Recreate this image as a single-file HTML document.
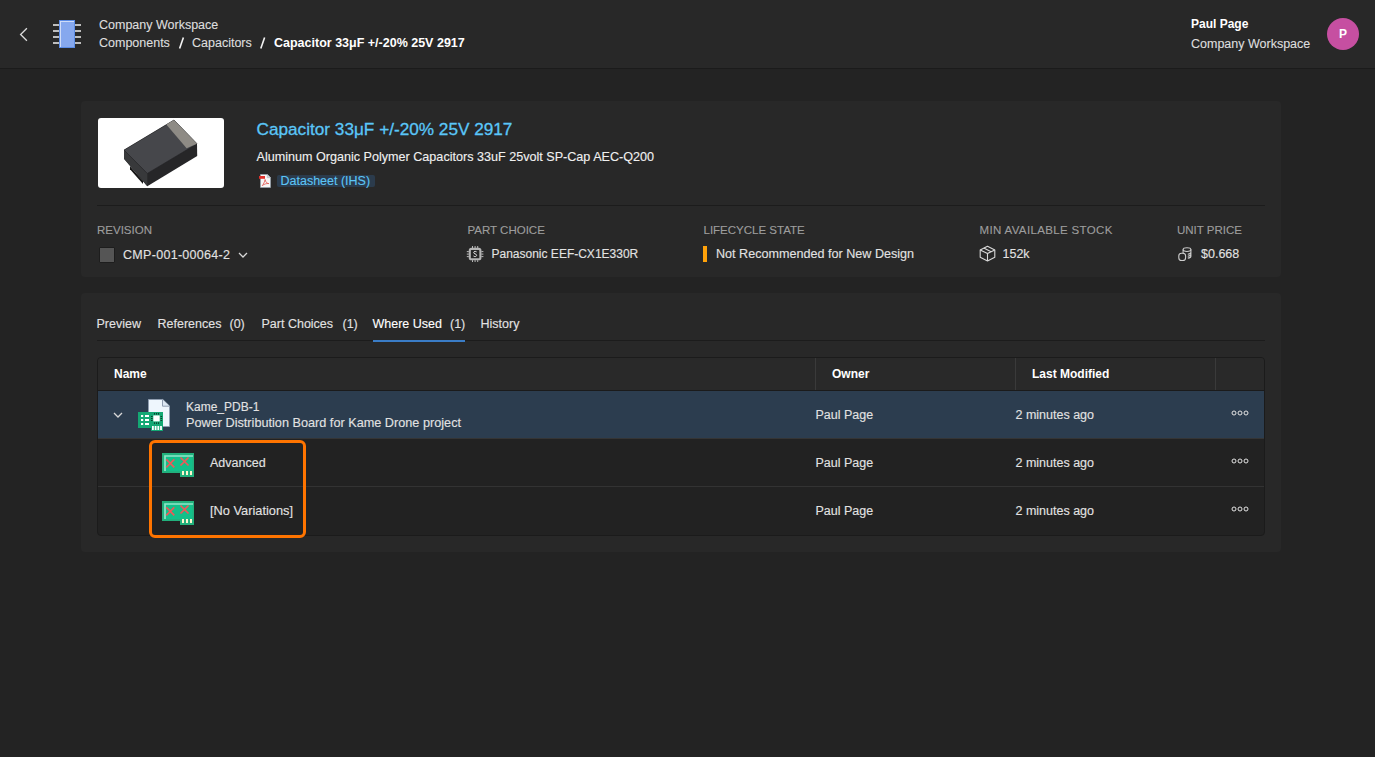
<!DOCTYPE html>
<html><head><meta charset="utf-8">
<style>
*{margin:0;padding:0;box-sizing:border-box}
html,body{width:1375px;height:757px;overflow:hidden;background:#232323;font-family:"Liberation Sans",sans-serif;color:#e2e2e2;-webkit-text-stroke:0.12px}
.b{-webkit-text-stroke:0}
.a{position:absolute;white-space:pre;line-height:1}
.t125{font-size:12.5px}
.b{font-weight:700}
#hdr{position:absolute;left:0;top:0;width:1375px;height:69px;background:#282828;border-bottom:1px solid #1b1b1b}
.card{position:absolute;background:#282828;border-radius:4px}
.lbl{font-size:11.5px;color:#9d9d9d}
</style></head><body>
<div id="hdr"></div>
<!-- back chevron -->
<svg class="a" style="left:0;top:0" width="100" height="68">
  <polyline points="26.9,28.3 20.6,34.5 26.9,40.7" fill="none" stroke="#dcdcdc" stroke-width="1.3"/>
  <g fill="#bdbdbd">
    <rect x="53" y="24" width="6" height="2"/><rect x="53" y="30" width="6" height="2"/><rect x="53" y="36" width="6" height="2"/><rect x="53" y="42" width="6" height="2"/>
    <rect x="75" y="24" width="6" height="2"/><rect x="75" y="30" width="6" height="2"/><rect x="75" y="36" width="6" height="2"/><rect x="75" y="42" width="6" height="2"/>
  </g>
  <rect x="59" y="20" width="16" height="28" fill="#5b8ce6"/>
  <rect x="60" y="21" width="14" height="26" fill="#cfdcf7"/>
  <rect x="61" y="22" width="13" height="25" fill="#86a8ee"/>
</svg>
<div class="a t125" style="left:99px;top:19.3px;color:#dedede">Company Workspace</div>
<div class="a t125" style="left:99px;top:37.1px;color:#dedede">Components</div>
<svg class="a" style="left:170px;top:30px" width="110" height="25"><g stroke="#f4f4f4" stroke-width="1.6"><path d="M13.4,7.6 L9.6,18.6"/><path d="M94.6,7.6 L90.8,18.6"/></g></svg>
<div class="a t125" style="left:192px;top:37.1px;color:#dedede">Capacitors</div>

<div class="a t125 b" style="left:274px;top:37.1px;color:#fff">Capacitor 33μF +/-20% 25V 2917</div>

<div class="a b" style="left:1191px;top:17.8px;font-size:12px;color:#fff">Paul Page</div>
<div class="a t125" style="left:1191px;top:38.4px;color:#dedede">Company Workspace</div>
<div class="a b" style="left:1327px;top:18px;width:32px;height:32px;border-radius:50%;background:#c64fa1;color:#fff;font-size:12px;line-height:32px;text-align:center">P</div>

<!-- card 1 -->
<div class="card" style="left:81px;top:101px;width:1200px;height:176px"></div>
<div class="a" style="left:98px;top:118px;width:126px;height:70px;background:#fff;border-radius:3px"></div>
<svg class="a" style="left:0;top:0" width="300" height="200">
  <polygon points="124,150 174,120 197,143.7 197.2,156 147.3,186.3 124,158.8" fill="#262628"/>
  <polygon points="124,150 147.3,173.4 147.3,186.3 124,158.8" fill="#38393b"/>
  <polygon points="130,166.2 143,181 143,184 130,169.2" fill="#151515"/>
  <polygon points="124,150 174,120 197,143.7 147.3,173.4" fill="#46474b" stroke="#1e1e20" stroke-width="0.5"/>
  <polygon points="166.3,124.6 174,120 197,143.7 186.6,148.2" fill="#8e8b85"/>
</svg>
<div class="a" style="left:256.5px;top:120.6px;font-size:17.2px;color:#5ac6f8;-webkit-text-stroke:0.3px">Capacitor 33μF +/-20% 25V 2917</div>
<div class="a" style="left:256.5px;top:150.5px;font-size:12.6px;color:#f0f0f0">Aluminum Organic Polymer Capacitors 33uF 25volt SP-Cap AEC-Q200</div>
<svg class="a" style="left:256px;top:172px" width="18" height="18" viewBox="256 172 18 18">
  <path d="M260.5,174.5 H267.5 L270.5,177.5 V187.5 H260.5 Z" fill="#f7f7f7" stroke="#9aa3ad" stroke-width="0.7"/>
  <path d="M267.3,174.6 V177.7 H270.4 Z" fill="#d9dee4" stroke="#9aa3ad" stroke-width="0.5"/>
  <rect x="259" y="176" width="6" height="2.8" fill="#e0312c"/>
  <path d="M262.3,185.6 C263.5,184.2 264.8,181.5 265.1,179.5 C265.4,181.8 266.6,183.2 268.8,183.6 C266.8,183.3 264.2,184 262.3,185.6 Z" fill="none" stroke="#e0403a" stroke-width="0.7"/>
</svg>
<div class="a" style="left:277px;top:175px;width:98px;height:12px;background:#2b3b4c;border-radius:2px"></div>
<div class="a t125" style="left:280.5px;top:175.3px;color:#5bc4f5">Datasheet (IHS)</div>

<div class="a" style="left:97px;top:205px;width:1168px;height:1px;background:#1c1c1c"></div>

<div class="a lbl" style="left:97px;top:225px">REVISION</div>
<div class="a lbl" style="left:467.5px;top:225px">PART CHOICE</div>
<div class="a lbl" style="left:703.5px;top:225px">LIFECYCLE STATE</div>
<div class="a lbl" style="left:979.5px;top:225px;letter-spacing:0.35px">MIN AVAILABLE STOCK</div>
<div class="a lbl" style="left:1177px;top:225px">UNIT PRICE</div>

<div class="a" style="left:99px;top:247px;width:16px;height:16px;background:#555;border:1px solid #1d1d1d;border-radius:1px"></div>
<div class="a t125" style="left:123px;top:249.4px;letter-spacing:0.3px">CMP-001-00064-2</div>
<svg class="a" style="left:237px;top:250px" width="12" height="10"><polyline points="2,3 6,7 10,3" fill="none" stroke="#d8d8d8" stroke-width="1.3"/></svg>

<svg class="a" style="left:464px;top:243px" width="22" height="22" viewBox="464 243 22 22">
  <rect x="469.8" y="248.9" width="10.6" height="10.4" rx="1.6" fill="#262626" stroke="#b4b4b4" stroke-width="2.1"/>
  <g stroke="#c8c8c8" stroke-width="0.9">
    <path d="M472.5,246 V248 M475.1,246 V248 M477.7,246 V248 M472.5,260.2 V262 M475.1,260.2 V262 M477.7,260.2 V262"/>
    <path d="M466.8,251.6 H468.8 M466.8,254.1 H468.8 M466.8,256.6 H468.8 M481.4,251.6 H483.4 M481.4,254.1 H483.4 M481.4,256.6 H483.4"/>
  </g>
  <path d="M476.6,251.9 C476.2,251.5 475.6,251.4 475.1,251.4 C474.3,251.4 473.7,251.9 473.7,252.6 C473.7,254.1 476.6,253.6 476.6,255.3 C476.6,256.1 475.9,256.6 475.1,256.6 C474.5,256.6 473.9,256.4 473.5,256" fill="none" stroke="#e8e8e8" stroke-width="1"/>
</svg>
<div class="a" style="left:491.5px;top:247.9px;font-size:12px">Panasonic EEF-CX1E330R</div>

<div class="a" style="left:703px;top:246px;width:4px;height:16px;background:#ffa20a"></div>
<div class="a t125" style="left:716px;top:248.4px;font-size:12.6px">Not Recommended for New Design</div>

<svg class="a" style="left:979px;top:245px" width="17" height="17" viewBox="0 0 17 17">
  <g stroke="#d8d8d8" stroke-width="1.1" fill="none" stroke-linejoin="round">
    <path d="M8.5,1.2 L15.8,4.9 V12.3 L8.5,16 L1.2,12.3 V4.9 Z"/>
    <path d="M1.2,4.9 L8.5,8.6 L15.8,4.9 M8.5,8.6 V16 M4.8,3 L12.1,6.8"/>
  </g>
</svg>
<div class="a t125" style="left:1002.5px;top:248.4px">152k</div>

<svg class="a" style="left:1174px;top:243px" width="22" height="22" viewBox="1174 243 22 22">
  <g stroke="#cdcdcd" stroke-width="1.1" fill="none">
    <ellipse cx="1187" cy="249.6" rx="3.9" ry="1.9"/>
    <path d="M1183.1,249.6 V254 M1190.9,249.6 V256.2 C1190.9,257.2 1189.6,257.9 1187.8,258.1 M1190.9,252.3 C1190.9,253.3 1189.6,254 1187.8,254.2 M1190.9,254.3 C1190.9,255.3 1189.6,256 1187.8,256.2"/>
    <rect x="1178.8" y="253.3" width="6.8" height="7.2" rx="2.8" fill="#282828"/>
  </g>
</svg>
<div class="a t125" style="left:1201px;top:248.4px">$0.668</div>

<!-- card 2 -->
<div class="card" style="left:81px;top:293px;width:1200px;height:259px"></div>
<div class="a t125" style="left:96.5px;top:318.4px">Preview</div>
<div class="a t125" style="left:157.5px;top:318.4px">References</div>
<div class="a t125" style="left:229.5px;top:318.4px">(0)</div>
<div class="a t125" style="left:261.5px;top:318.4px">Part Choices</div>
<div class="a t125" style="left:342.5px;top:318.4px">(1)</div>
<div class="a t125" style="left:372.5px;top:318.4px;color:#fff">Where Used</div>
<div class="a t125" style="left:450px;top:318.4px">(1)</div>
<div class="a t125" style="left:480.5px;top:318.4px">History</div>
<div class="a" style="left:97px;top:340px;width:1168px;height:1px;background:#1c1c1c"></div>
<div class="a" style="left:373px;top:340px;width:92px;height:2px;background:#3a7cc6"></div>

<!-- table -->
<div class="a" style="left:97px;top:357px;width:1168px;height:179px;background:#222;border:1px solid #1b1b1b;border-radius:4px;overflow:hidden">
  <div class="a" style="left:0;top:0;width:1166px;height:33px;background:#292929;border-bottom:1px solid #1b1b1b"></div>
  <div class="a" style="left:717px;top:0;width:1px;height:32px;background:#3a3a3a"></div>
  <div class="a" style="left:917px;top:0;width:1px;height:32px;background:#3a3a3a"></div>
  <div class="a" style="left:1117px;top:0;width:1px;height:32px;background:#3a3a3a"></div>
  <div class="a" style="left:0;top:33px;width:1166px;height:47px;background:#2c3d4f"></div>
  <div class="a" style="left:0;top:128px;width:1166px;height:1px;background:#333"></div>
  <div class="a" style="left:0;top:80px;width:1166px;height:1px;background:#353535"></div>
</div>
<div class="a t125 b" style="left:114px;top:367.8px;font-size:12px;color:#fff">Name</div>
<div class="a t125 b" style="left:832px;top:367.8px;font-size:12px;color:#fff">Owner</div>
<div class="a t125 b" style="left:1032px;top:367.8px;font-size:12px;color:#fff">Last Modified</div>

<svg class="a" style="left:112px;top:410px" width="12" height="10"><polyline points="2,3 6,7 10,3" fill="none" stroke="#d8d8d8" stroke-width="1.3"/></svg>
<div class="a t125" style="left:186px;top:400.9px;font-size:12px">Kame_PDB-1</div>
<div class="a t125" style="left:186px;top:416.5px;font-size:12.7px">Power Distribution Board for Kame Drone project</div>
<div class="a t125" style="left:815.5px;top:408.7px">Paul Page</div>
<div class="a t125" style="left:1015.5px;top:408.7px">2 minutes ago</div>
<div class="a t125" style="left:210px;top:457.4px">Advanced</div>
<div class="a t125" style="left:815.5px;top:457.4px">Paul Page</div>
<div class="a t125" style="left:1015.5px;top:457.4px">2 minutes ago</div>
<div class="a t125" style="left:210px;top:505.1px;font-size:12.8px">[No Variations]</div>
<div class="a t125" style="left:815.5px;top:505.1px">Paul Page</div>
<div class="a t125" style="left:1015.5px;top:505.1px">2 minutes ago</div>


<!-- kame icon -->
<svg class="a" style="left:136px;top:397px" width="36" height="36" viewBox="136 397 36 36">
  <path d="M148.5,399.5 H162.8 L169.5,406 V426.5 H148.5 Z" fill="#eef6fd" stroke="#8f9db0" stroke-width="1"/>
  <path d="M162.5,399.5 V406.2 H169.5" fill="#dde8f3" stroke="#8f9db0" stroke-width="1"/>
  <rect x="138" y="412" width="25" height="16" fill="#14a874"/>
  <rect x="151" y="428" width="12" height="3" fill="#14a874"/>
  <g fill="#fff">
    <rect x="141" y="415" width="2.2" height="2"/><rect x="141" y="419" width="2.2" height="2"/><rect x="141" y="423" width="2.2" height="2"/>
    <rect x="145" y="415" width="4" height="2"/><rect x="145" y="419" width="4" height="2"/><rect x="145" y="423" width="4" height="2"/>
    <rect x="153.3" y="415.4" width="6.4" height="6"/>
    <rect x="152" y="426" width="1.8" height="4"/><rect x="154.7" y="426" width="1.8" height="4"/><rect x="157.4" y="426" width="1.8" height="4"/><rect x="160.1" y="426" width="1.8" height="4"/>
  </g>
  <g fill="#0b3d2b">
    <rect x="154" y="413" width="1" height="1.6"/><rect x="156" y="413" width="1" height="1.6"/><rect x="158" y="413" width="1" height="1.6"/>
    <rect x="154" y="422.3" width="1" height="1.6"/><rect x="156" y="422.3" width="1" height="1.6"/><rect x="158" y="422.3" width="1" height="1.6"/>
    <rect x="151" y="416" width="1.6" height="1"/><rect x="151" y="418" width="1.6" height="1"/><rect x="151" y="420" width="1.6" height="1"/>
    <rect x="160.5" y="416" width="1.6" height="1"/><rect x="160.5" y="418" width="1.6" height="1"/><rect x="160.5" y="420" width="1.6" height="1"/>
  </g>
</svg>
<svg class="a" style="left:161px;top:452px" width="35" height="26" viewBox="161 452 35 26">
  <path d="M162,453 H194 V477 H180 V473 H162 Z" fill="#22b07c"/>
  <rect x="164.5" y="455.2" width="28" height="16" fill="#13c08a"/>
  <path d="M165,471 V456 H193" fill="none" stroke="#92e3c8" stroke-width="1.7"/>
  <g stroke="#ef5858" stroke-width="1.7">
    <path d="M166.3,459.3 L174.3,467.3 M174.3,459.3 L166.3,467.3"/>
    <path d="M180.5,457.5 L188.5,465.5 M188.5,457.5 L180.5,465.5"/>
  </g>
  <g fill="#fff6cf"><rect x="182" y="471" width="2" height="4"/><rect x="186" y="471" width="2" height="4"/><rect x="190" y="471" width="2" height="4"/></g>
</svg>
<svg class="a" style="left:161px;top:500px" width="35" height="26" viewBox="161 452 35 26">
  <path d="M162,453 H194 V477 H180 V473 H162 Z" fill="#22b07c"/>
  <rect x="164.5" y="455.2" width="28" height="16" fill="#13c08a"/>
  <path d="M165,471 V456 H193" fill="none" stroke="#92e3c8" stroke-width="1.7"/>
  <g stroke="#ef5858" stroke-width="1.7">
    <path d="M166.3,459.3 L174.3,467.3 M174.3,459.3 L166.3,467.3"/>
    <path d="M180.5,457.5 L188.5,465.5 M188.5,457.5 L180.5,465.5"/>
  </g>
  <g fill="#fff6cf"><rect x="182" y="471" width="2" height="4"/><rect x="186" y="471" width="2" height="4"/><rect x="190" y="471" width="2" height="4"/></g>
</svg>
<svg class="a" style="left:1228px;top:408px" width="24" height="10"><g fill="none" stroke="#e4e4e4" stroke-width="1"><circle cx="6" cy="5" r="2"/><circle cx="12" cy="5" r="2"/><circle cx="18" cy="5" r="2"/></g></svg>
<svg class="a" style="left:1228px;top:456px" width="24" height="10"><g fill="none" stroke="#e4e4e4" stroke-width="1"><circle cx="6" cy="5" r="2"/><circle cx="12" cy="5" r="2"/><circle cx="18" cy="5" r="2"/></g></svg>
<svg class="a" style="left:1228px;top:504px" width="24" height="10"><g fill="none" stroke="#e4e4e4" stroke-width="1"><circle cx="6" cy="5" r="2"/><circle cx="12" cy="5" r="2"/><circle cx="18" cy="5" r="2"/></g></svg>
<!-- orange highlight -->
<div class="a" style="left:149px;top:440px;width:157px;height:98px;border:3px solid #ff7400;border-radius:6px"></div>
</body></html>
